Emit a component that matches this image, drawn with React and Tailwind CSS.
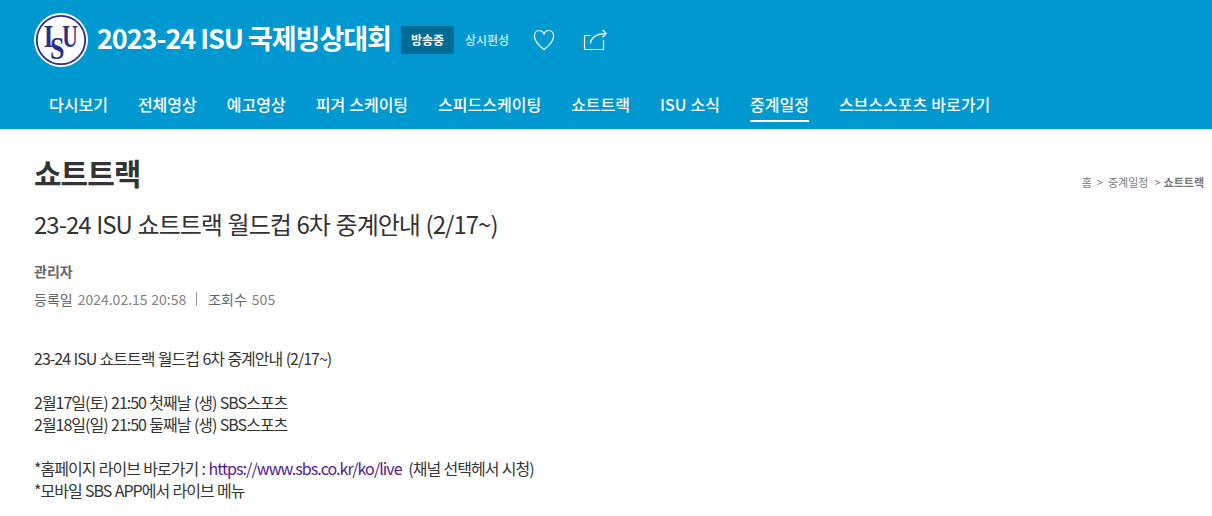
const menus = [
  { label: '다시보기' },
  { label: '전체영상' },
  { label: '예고영상' },
  { label: '피겨 스케이팅' },
  { label: '스피드스케이팅' },
  { label: '쇼트트랙' },
  { label: 'ISU 소식' },
  { label: '중계일정', active: true },
  { label: '스브스스포츠 바로가기' },
]

function Logo() {
  return (
    <svg width="54" height="54" viewBox="0 0 54 54" className="shrink-0" aria-label="ISU">
      <circle cx="27" cy="27" r="27" fill="#fff" />
      <circle cx="27" cy="27" r="24.2" fill="none" stroke="#2b2f83" strokeWidth="1.8" />
      <g fill="#2b2f83" className="font-['Liberation_Serif',serif] font-bold" textAnchor="middle">
        <text x="14.6" y="34" fontSize="31" textLength="9.5" lengthAdjust="spacingAndGlyphs">I</text>
        <text x="36" y="34" fontSize="31" textLength="15.5" lengthAdjust="spacingAndGlyphs">U</text>
        <text x="23.3" y="46" fontSize="32" textLength="14.5" lengthAdjust="spacingAndGlyphs">S</text>
      </g>
    </svg>
  )
}

function Header() {
  return (
    <header className="h-[129px] bg-[#0098d0] text-white">
      <div className="flex h-20 items-center pl-[34px]">
        <Logo />
        <h1 className="ml-[9px] -mt-1 w-[294px] text-[27px] leading-10 font-bold tracking-[-1.06px]">2023-24 ISU 국제빙상대회</h1>
        <span className="ml-[10px] flex h-7 w-[53px] items-center justify-center bg-[#006b95] text-[12px] font-bold">방송중</span>
        <span className="ml-[11px] w-11 text-[12px] font-medium opacity-80">상시편성</span>
        <button className="ml-6" aria-label="좋아요">
          <svg width="22" height="22" viewBox="0 0 22 22" fill="none" stroke="#fff" strokeWidth="1.2">
            <path d="M11 20.6C7 17.6 1.4 12.6 1.4 7.1C1.4 3.8 3.4 1.5 6.1 1.5C8.5 1.5 10.2 2.8 11 4.8C11.8 2.8 13.5 1.5 15.9 1.5C18.6 1.5 20.6 3.8 20.6 7.1C20.6 12.6 15 17.6 11 20.6Z" />
          </svg>
        </button>
        <button className="ml-[28px]" aria-label="공유">
          <svg width="25" height="22" viewBox="0 0 25 22" fill="none" stroke="#fff" strokeWidth="1.2">
            <path d="M7 6.5H1.5V20.5H20.5V11" />
            <path d="M7.5 14.5C8 8.5 12 5 23 4.6M19.5 1L23.3 4.5L19.5 8.2" />
          </svg>
        </button>
      </div>
      <nav className="flex gap-[30px] pl-[49px] [word-spacing:0.5px]">
        {menus.map(m => (
          <a key={m.label}
            className={`h-[42px] border-b-2 text-[16px] leading-[49px] font-medium ${m.active ? 'border-white' : 'border-transparent'}`}>
            {m.label}
          </a>
        ))}
      </nav>
    </header>
  )
}

export default function App() {
  return (
    <div className="h-[516px] overflow-hidden bg-white font-['Noto_Sans_CJK_KR',sans-serif] whitespace-nowrap text-[#333]">
      <Header />
      <main className="pl-[34px]">
        <div className="flex items-start justify-between pt-[22px] pr-2">
          <h2 className="text-[30px] leading-[42px] font-bold tracking-[-1px]">쇼트트랙</h2>
          <div className="mt-[21px] flex text-[11px] leading-5 text-[#777]">
            <span>홈</span>
            <span className="mx-[5px]">&gt;</span>
            <span>중계일정</span>
            <span className="mr-[3px] ml-[6px]">&gt;</span>
            <span className="font-bold">쇼트트랙</span>
          </div>
        </div>

        <h3 className="mt-[14px] text-[24px] leading-[34px] tracking-[-1px] [word-spacing:1.3px]">23-24 ISU 쇼트트랙 월드컵 6차 중계안내 (2/17~)</h3>

        {/* 작성 정보 */}
        <p className="mt-5 text-[14px] leading-5 font-bold text-[#666]">관리자</p>
        <div className="mt-2 flex items-center text-[14px] leading-5 text-[#808080]">
          <span className="text-[#666]">등록일</span>
          <span className="ml-[5px] [word-spacing:0.5px]">2024.02.15 20:58</span>
          <span className="mr-[11px] ml-[10px] h-[14px] w-px bg-[#999]" />
          <span className="text-[#666]">조회수</span>
          <span className="ml-[5px]">505</span>
        </div>

        {/* 본문 */}
        <div className="mt-[38px] text-[16px] leading-[22px] tracking-[-1px] [word-spacing:0.8px]">
          <p>23-24 ISU 쇼트트랙 월드컵 6차 중계안내 (2/17~)</p>
          <br />
          <p>2월17일(토) 21:50 첫째날 (생) SBS스포츠</p>
          <p>2월18일(일) 21:50 둘째날 (생) SBS스포츠</p>
          <br />
          <p>*홈페이지 라이브 바로가기 : <a className="tracking-[-0.93px] text-[#551a8b]">https://www.sbs.co.kr/ko/live</a>&nbsp; (채널 선택헤서 시청)</p>
          <p>*모바일 SBS APP에서 라이브 메뉴</p>
        </div>
      </main>
    </div>
  )
}
